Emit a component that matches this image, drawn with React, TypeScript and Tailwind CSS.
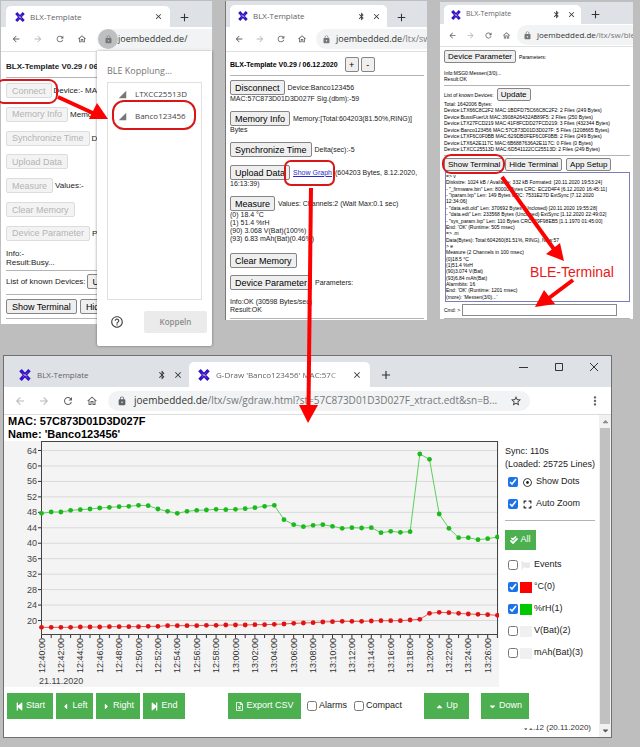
import type { ReactNode } from "react";
import {
  MdArrowBack,
  MdArrowForward,
  MdBluetooth,
  MdClose,
  MdAdd,
  MdHelpOutline,
  MdLock,
  MdMoreVert,
  MdOutlineHome,
  MdRefresh,
  MdSignalCellular4Bar,
  MdStarBorder,
} from "react-icons/md";
import {
  FaCaretDown,
  FaCaretLeft,
  FaCaretRight,
  FaCaretUp,
  FaCheckDouble,
  FaExpand,
  FaFlag,
  FaRegDotCircle,
  FaRegFileExcel,
  FaStepBackward,
  FaStepForward,
} from "react-icons/fa";

const UI = "font-['Open_Sans','Noto_Sans',sans-serif]";

function Logo({ className }: { className: string }) {
  return (
    <svg viewBox="0 0 12 12" className={`shrink-0 ${className}`} aria-hidden="true">
      <path d="M1.5 1.2 Q6 6.5 10.5 10.8 M10.5 1.2 Q6 6 1.5 10.8" stroke="#2b16c9" strokeWidth="3.4" fill="none" />
      <path d="M3.5 4 L8.5 8.5 M8.5 3.5 L4 8" stroke="#8a3fc4" strokeWidth="1" fill="none" />
      <path d="M4.5 5.5 L7.5 6.8" stroke="#e08ab0" strokeWidth="1.2" />
    </svg>
  );
}

type TopProps = {
  url: ReactNode;
  bluetooth?: boolean;
  strip: string;
  tab: string;
  title: string;
  bar: string;
  nav: string;
  icon: string;
  omni: string;
  highlightLock?: boolean;
};

function BrowserTop({ url, bluetooth, strip, tab, title, bar, nav, icon, omni, highlightLock }: TopProps) {
  return (
    <header className={`${UI} text-[#5f6368]`}>
      <div className={`flex items-end bg-[#dee1e6] ${strip}`}>
        <div className={`flex items-center rounded-t-[5px] bg-white ${tab}`}>
          <Logo className="size-[10px]" />
          <span className={`ml-[5px] flex-1 ${title}`}>BLX-Template</span>
          {bluetooth && <MdBluetooth className="mr-[6px] size-[9px] text-[#333]" />}
          <button aria-label="Close tab" className="text-[#333]"><MdClose className="size-[9px]" /></button>
        </div>
        <button aria-label="New tab" className="mb-[3px] ml-[8px] text-[#333]"><MdAdd className="size-[13px]" /></button>
      </div>
      <div className={`flex items-center border-b border-[#e0e0e0] bg-white ${bar}`}>
        <div className={`flex items-center ${nav}`}>
          <button aria-label="Back"><MdArrowBack className={icon} /></button>
          <button aria-label="Forward" className="text-[#b5b8bb]"><MdArrowForward className={icon} /></button>
          <button aria-label="Reload"><MdRefresh className={icon} /></button>
          <button aria-label="Home"><MdOutlineHome className={icon} /></button>
        </div>
        <div className={`flex h-[20px] flex-1 items-center overflow-hidden rounded-l-full bg-[#f1f3f4] whitespace-nowrap text-[#777] ${omni}`}>
          <span className={`flex size-[20px] shrink-0 items-center justify-center rounded-full ${highlightLock ? "bg-[#bdbfc1]" : ""}`}>
            <MdLock className="size-[9px]" />
          </span>
          <span>{url}</span>
        </div>
      </div>
    </header>
  );
}

const buttonSizes = {
  regular: "h-[15px] px-[5px] text-[9px] leading-[12px]",
  snug: "h-[15px] px-[4px] text-[9px] leading-[12px]",
  square: "h-[15px] w-[14px] text-[9px] leading-[12px]",
  small: "h-[13px] px-[3px] text-[8px] leading-[10px]",
};

function Btn({ children, disabled, size = "regular", className = "" }: {
  children: ReactNode;
  disabled?: boolean;
  size?: keyof typeof buttonSizes;
  className?: string;
}) {
  return (
    <button
      disabled={disabled}
      className={`shrink-0 rounded-[2px] border border-[#858585] bg-[#efefef] text-black disabled:border-[#dcdcdc] disabled:bg-[#f3f3f3] disabled:text-[#b4b4b4] ${buttonSizes[size]} ${className}`}
    >
      {children}
    </button>
  );
}

function Rule({ className = "" }: { className?: string }) {
  return <hr className={`border-t border-[#b4b4b4] ${className}`} />;
}

function PairingWindow() {
  const rows: [string, string][] = [
    ["Connect", "Device:- MAC"],
    ["Memory Info", "Memory:-"],
    ["Synchronize Time", "D"],
    ["Upload Data", ""],
    ["Measure", "Values:-"],
    ["Clear Memory", ""],
    ["Device Parameter", "P"],
  ];
  return (
    <section className="relative mt-px h-[345px]">
      <div className="h-[323px] overflow-hidden bg-white">
        <BrowserTop
          url={<span className="text-[#333]">joembedded.de/</span>}
          strip="h-[26px]"
          tab="ml-[5px] h-[21px] w-[164px] pl-[9px] pr-[7px]"
          title="text-[8px]"
          bar="h-[25px]"
          nav="gap-[12px] pl-[10px] pr-[10px]"
          icon="size-[10px]"
          omni="pl-px text-[9px]"
          highlightLock
        />
        <div className="pl-[5px] pt-[10px] text-[8px] leading-[9px] whitespace-nowrap">
          <h1 className="text-[8px] leading-[10px] font-bold">BLX-Template V0.29 / 06.</h1>
          <Rule className="mt-[5px]" />
          <div className="mt-[5px] flex h-[158px] flex-col justify-between">
            {rows.map(([label, text]) => (
              <div key={label} className="flex items-center gap-[2px]">
                <Btn disabled>{label}</Btn>
                <span>{text}</span>
              </div>
            ))}
          </div>
          <p className="mt-[8px]">Info:-</p>
          <p>Result:Busy...</p>
          <Rule className="mt-[3px]" />
          <div className="mt-[3px] flex items-center">
            List of known Devices: <Btn className="ml-px">Update</Btn>
          </div>
          <Rule className="mt-[5px]" />
          <div className="mt-[4px] flex gap-[3px]">
            <Btn>Show Terminal</Btn>
            <Btn>Hide Terminal</Btn>
          </div>
          <Rule className="mt-[4px]" />
        </div>
      </div>

      <div role="dialog" aria-label="BLE Kopplung" className={`absolute top-[50px] right-0 bottom-0 left-[96px] flex flex-col rounded-b-[2px] bg-white pt-[13px] pr-[5px] pl-[10px] text-[#444] shadow-[0_0_3px_rgba(0,0,0,0.45)] ${UI}`}>
        <h2 className="text-[9px] leading-[14px] text-[#757575]">BLE Kopplung...</h2>
        <ul className="mt-[4px] mr-[5px] h-[218px] border border-[#e0e0e0] text-[8px]">
          {["LTXCC25513D", "Banco123456"].map((name) => (
            <li key={name} className="flex h-[22px] items-center gap-[8px] pl-[10px]">
              <MdSignalCellular4Bar className="size-[9px] text-[#777]" />
              {name}
            </li>
          ))}
        </ul>
        <div className="mt-[11px] flex items-center justify-between pl-[3px]">
          <button aria-label="Help"><MdHelpOutline className="size-[14px]" /></button>
          <button disabled className="h-[22px] w-[63px] rounded-[2px] bg-[#ebebeb] text-[8px] font-semibold text-[#8c8c8c]">Koppeln</button>
        </div>
      </div>
    </section>
  );
}

function DeviceWindow() {
  return (
    <section className="mt-px h-[319px] overflow-hidden border-l border-[#777] bg-white">
      <BrowserTop
        url={<><span className="text-[#333]">joembedded.de</span>/ltx/sw</>}
        bluetooth
        strip="h-[26px]"
        tab="ml-[4px] h-[22px] w-[157px] pl-[8px] pr-[6px]"
        title="text-[8px]"
        bar="h-[25px]"
        nav="gap-[11px] pl-[8px] pr-[9px]"
        icon="size-[10px]"
        omni="text-[9px]"
      />
      <div className="pt-[5px] pr-[3px] pl-[4px] text-[7px] leading-[8px] whitespace-nowrap">
        <div className="flex items-center gap-[2px]">
          <h1 className="mr-[5px] text-[7px] font-bold text-black">BLX-Template V0.29 / 06.12.2020</h1>
          <Btn size="square">+</Btn>
          <Btn size="square">-</Btn>
        </div>
        <Rule className="mt-[3px]" />
        <div className="mt-[4px] flex items-center gap-[3px]">
          <Btn size="snug">Disconnect</Btn>
          <span>Device:Banco123456</span>
        </div>
        <p>MAC:57C873D01D3D027F Sig.(dbm):-59</p>
        <div className="mt-[8px] flex items-center gap-[3px]">
          <Btn size="snug">Memory Info</Btn>
          <span>Memory:[Total:604203(81.50%,RING)]</span>
        </div>
        <p>Bytes</p>
        <div className="mt-[8px] flex items-center gap-[3px]">
          <Btn size="snug">Synchronize Time</Btn>
          <span>Delta(sec):-5</span>
        </div>
        <div className="mt-[8px] flex items-center gap-[3px]">
          <Btn size="snug">Upload Data</Btn>
          <a href="#graph" className="text-[#2a2ac8] underline">Show Graph</a>
          <span>(604203 Bytes, 8.12.2020,</span>
        </div>
        <p>16:13:39)</p>
        <div className="mt-[8px] flex items-center gap-[3px]">
          <Btn size="snug">Measure</Btn>
          <span>Values: Channels:2 (Wait Max:0.1 sec)</span>
        </div>
        <p>(0) 18.4 °C</p>
        <p>(1) 51.4 %rH</p>
        <p>(90) 3.068 V(Bat)(100%)</p>
        <p>(93) 6.83 mAh(Bat)(0.46%)</p>
        <div className="mt-[10px] flex">
          <Btn size="snug">Clear Memory</Btn>
        </div>
        <div className="mt-[7px] flex items-center gap-[3px]">
          <Btn size="snug">Device Parameter</Btn>
          <span>Parameters:</span>
        </div>
        <p className="mt-[8px]">Info:OK (30598 Bytes/sec)</p>
        <p>Result:OK</p>
        <Rule className="mt-[4px]" />
      </div>
    </section>
  );
}

const devices = [
  "Total: 1642006 Bytes:",
  "Device:LTX66C8C2F2 MAC:1BDFD75C66C8C2F2: 2 Files (249 Bytes)",
  "Device:BussiFuerUt MAC:3908A26432AB89F5: 2 Files (250 Bytes)",
  "Device:LTX27FCD219 MAC:41F8FCDD27FCD219: 3 Files (432344 Bytes)",
  "Device:Banco123456 MAC:57C873D01D3D027F: 5 Files (1208665 Bytes)",
  "Device:LTXF6C0F0BB MAC:629DB0FEF6C0F0BB: 2 Files (249 Bytes)",
  "Device:LTX6A2E117C MAC:6B6887636A2E117C: 0 Files (0 Bytes)",
  "Device:LTXCC25513D MAC:6D541122CC25513D: 2 Files (249 Bytes)",
];

const terminal = [
  "=> v",
  "Disksize: 1024 kB / Available: 332 kB Formated: [20.11.2020 19:53:24]",
  '- "_firmware.bin" Len: 80000 Bytes CRC: EC2D4F4 [6.12.2020 16:45:11]',
  '- "iparam.lxp" Len: 149 Bytes CRC: 7531E27D ExtSync [7.12.2020',
  "12:34:06]",
  '- "data.edt.old" Len: 370692 Bytes (Unclosed) [20.11.2020 19:55:28]',
  '- "data.edt" Len: 233568 Bytes (Unclosed) ExtSync [1.12.2020 22:49:02]',
  '- "sys_param.lxp" Len: 110 Bytes CRC: 29F98EB5 [1.1.1970 01:45:00]',
  "End: 'OK' (Runtime: 505 msec)",
  "=> .m",
  "Data(Bytes): Total:604260(81.51%, RING), New:57",
  "> e",
  "Measure (2 Channels in 100 msec)",
  "(0)18.5 °C",
  "(1)51.4 %rH",
  "(90)3.074 V(Bat)",
  "(93)6.84 mAh(Bat)",
  "Alarmbits: 16",
  "End: 'OK' (Runtime: 1201 msec)",
  "(more): 'Messen(3/0)...'",
];

function TerminalWindow() {
  return (
    <section className="mt-[2px] h-[317px] overflow-hidden bg-white">
      <BrowserTop
        url={<><span className="text-[#333]">joembedded.de</span>/ltx/sw/ble_</>}
        bluetooth
        strip="h-[22px]"
        tab="ml-[4px] h-[19px] w-[137px] pl-[7px] pr-[5px]"
        title="text-[7px]"
        bar="h-[23px]"
        nav="gap-[9px] pl-[8px] pr-[6px]"
        icon="size-[9px]"
        omni="text-[8px]"
      />
      <div className="pt-[3px] pr-[3px] pl-[4px] text-[5px] leading-[6px] whitespace-nowrap text-black">
        <div className="flex items-center gap-[3px]">
          <Btn size="small">Device Parameter</Btn>
          <span>Parameters:</span>
        </div>
        <p className="mt-[7px]">Info:MSG0:Messen(3/0)...</p>
        <p>Result:OK</p>
        <Rule className="mt-[3px]" />
        <div className="mt-[2px] flex items-center gap-[3px]">
          <span>List of known Devices:</span>
          <Btn size="small">Update</Btn>
        </div>
        <div className="flex h-[51px] flex-col justify-between">
          {devices.map((line) => <p key={line}>{line}</p>)}
        </div>
        <Rule className="mt-[3px]" />
        <div className="mt-[2px] flex">
          <Btn size="small">Show Terminal</Btn>
          <Btn size="small" className="ml-px">Hide Terminal</Btn>
          <Btn size="small" className="ml-[4px]">App Setup</Btn>
        </div>
        <div className="mt-px ml-px flex h-[130px] flex-col justify-between border border-[#7d7dbb] pb-px">
          {terminal.map((line, i) => <p key={i}>{line}</p>)}
        </div>
        <label className="mt-[2px] flex items-center gap-[2px] pr-[13px]">
          Cmd: &gt;
          <input type="text" className="h-[12px] min-w-0 flex-1 border border-[#8a8a8a] px-[2px] text-[8px]" />
        </label>
        <Rule className="mt-[2px]" />
      </div>
    </section>
  );
}

const humidity = [
  160, 156, 156, 151, 149, 147, 144, 142, 140, 139, 136, 137, 147, 154, 160, 154, 151, 150, 148, 149, 148, 146, 143, 139,
  136, 179, 194, 200, 196, 194, 199, 205, 203, 204, 203, 218, 214, 217, 215, -18, -2, 162, 205, 233, 233, 239, 236, 231,
].map((v) => 19 + v / 3);
const temperature = [
  82, 82, 82, 82, 81, 81, 81, 80, 80, 80, 80, 79, 79, 77, 77, 77, 77, 76, 76, 75, 75, 75, 74, 74, 73, 72, 70, 69, 68, 66,
  65, 64, 64, 64, 63, 62, 62, 62, 60, 58, 40, 37, 38, 40, 42, 43, 44, 46,
].map((v) => 159 + v / 3);

function Chart() {
  const x = (i: number) => 37.5 + i * 9.7;
  const levels = Array.from({ length: 12 }, (_, i) => 64 - i * 4);
  const y = (v: number) => 9.5 + (64 - v) * 3.864;
  const line = (pts: number[]) => pts.map((p, i) => `${x(i)},${p}`).join(" ");
  const time = (i: number) => {
    const m = 40 + i;
    return `${m < 60 ? 12 : 13}:${String(m % 60).padStart(2, "0")}:00`;
  };
  return (
    <svg viewBox="0 0 495 246" className="block w-full bg-[#f4f4f4] font-['Liberation_Sans',sans-serif] text-[9px]" role="img" aria-label="Humidity and temperature over time">
      {levels.map((v) => (
        <g key={v}>
          <line x1="38" x2="494" y1={y(v)} y2={y(v)} stroke="#dadada" />
          <line x1="34" x2="38" y1={y(v)} y2={y(v)} stroke="#333" />
          <text x="33" y={y(v) + 3} textAnchor="end" fill="#444">{v}</text>
        </g>
      ))}
      <rect x="37.5" y="0.5" width="456" height="193" fill="none" stroke="#444" />
      {temperature.map((_, i) => (
        <g key={i}>
          <line x1={x(i)} x2={x(i)} y1="194" y2="197" stroke="#333" />
          {i % 2 === 0 && (
            <text transform={`translate(${x(i) + 3} 232) rotate(-90)`} fill="#333">{time(i)}</text>
          )}
        </g>
      ))}
      <text x="35" y="243" fill="#444">21.11.2020</text>
      <polyline points={line(humidity)} fill="none" stroke="#5cd05c" />
      {humidity.map((p, i) => <circle key={i} cx={x(i)} cy={p} r="2.4" fill="#1cb81c" />)}
      <polyline points={line(temperature)} fill="none" stroke="#f05050" />
      {temperature.map((p, i) => <circle key={i} cx={x(i)} cy={p} r="2.4" fill="#e01212" />)}
    </svg>
  );
}

function Green({ children, className }: { children: ReactNode; className: string }) {
  return (
    <button className={`flex items-center justify-center gap-[2px] bg-[#4caf50] text-[9px] text-white ${className}`}>
      {children}
    </button>
  );
}

function GraphWindow() {
  const box = "size-[10px] shrink-0 accent-[#1a73e8]";
  const channels = [
    { name: "°C(0)", color: "bg-[#ff0000]", on: true },
    { name: "%rH(1)", color: "bg-[#00c800]", on: true },
    { name: "V(Bat)(2)", color: "bg-[#f0f0f0]", on: false },
    { name: "mAh(Bat)(3)", color: "bg-[#f0f0f0]", on: false },
  ];
  return (
    <section className="mt-[9px] mr-[28px] ml-[3px] border border-[#707070] bg-white">
      <header className={`${UI} text-[#5f6368]`}>
        <div className="flex h-[31px] items-end bg-[#dee1e6]">
          <div className="flex h-[25px] w-[185px] items-center pr-[6px] pl-[15px]">
            <Logo className="size-[12px]" />
            <span className="ml-[6px] flex-1 text-[8px]">BLX-Template</span>
            <MdBluetooth className="mr-[6px] size-[10px] text-[#333]" />
            <button aria-label="Close tab" className="text-[#333]"><MdClose className="size-[10px]" /></button>
          </div>
          <div className="flex h-[25px] w-[181px] items-center rounded-t-[5px] bg-white pr-[8px] pl-[9px]">
            <Logo className="size-[12px]" />
            <span className="ml-[6px] flex-1 overflow-hidden [mask-image:linear-gradient(to_right,black_85%,transparent)] text-[8px] whitespace-nowrap">G-Draw 'Banco123456' MAC:57C</span>
            <button aria-label="Close tab" className="ml-[4px] text-[#333]"><MdClose className="size-[10px]" /></button>
          </div>
          <button aria-label="New tab" className="mb-[5px] ml-[9px] text-[#333]"><MdAdd className="size-[14px]" /></button>
          <div className="mb-[15px] ml-auto flex items-center gap-[25px] pr-[12px]">
            {["M0 5.500H9", "M1.500 1.500H8.500V8.500H1.500Z", "M1 1L9 9M9 1L1 9"].map((d, i) => (
              <button key={d} aria-label={["Minimize", "Maximize", "Close"][i]}>
                <svg viewBox="0 0 10 10" className="size-[10px]"><path d={d} fill="none" stroke="#333" /></svg>
              </button>
            ))}
          </div>
        </div>
        <div className="flex h-[28px] items-center border-b border-[#dcdcdc] pr-[9px]">
          <div className="flex items-center gap-[12px] pr-[10px] pl-[10px]">
            <button aria-label="Back" className="text-[#b5b8bb]"><MdArrowBack className="size-[12px]" /></button>
            <button aria-label="Forward" className="text-[#b5b8bb]"><MdArrowForward className="size-[12px]" /></button>
            <button aria-label="Reload"><MdRefresh className="size-[12px]" /></button>
            <button aria-label="Home"><MdOutlineHome className="size-[12px]" /></button>
          </div>
          <div className="flex h-[20px] w-[422px] items-center rounded-full bg-[#f1f3f4] pr-[8px] pl-[9px] text-[10px] whitespace-nowrap text-[#777]">
            <MdLock className="mr-[7px] size-[10px] text-[#5f6368]" />
            <span className="flex-1"><span className="text-[#333]">joembedded.de</span>/ltx/sw/gdraw.html?st=57C873D01D3D027F_xtract.edt&amp;sn=B...</span>
            <button aria-label="Bookmark" className="text-[#333]"><MdStarBorder className="size-[12px]" /></button>
          </div>
          <button aria-label="Menu" className="ml-auto"><MdMoreVert className="size-[14px]" /></button>
        </div>
      </header>

      <div className="flex">
        <div className="min-w-0 flex-1">
          <div className="flex">
            <main className="min-w-0 flex-1">
              <h2 className="pl-[4px] text-[11px] leading-[13px] font-bold text-black">
                MAC: 57C873D01D3D027F<br />Name: 'Banco123456'
              </h2>
              <Chart />
            </main>
            <aside className="w-[100px] shrink-0 pt-[30px] pr-[4px] pl-[6px] text-[9px] whitespace-nowrap text-[#222]">
              <p className="leading-[13px]">Sync: 110s</p>
              <p className="leading-[13px]">(Loaded: 25725 Lines)</p>
              <label className="flex h-[22px] items-center pl-[3px]">
                <input type="checkbox" defaultChecked className={box} />
                <FaRegDotCircle className="mr-[4px] ml-[5px] size-[9px]" />Show Dots
              </label>
              <label className="flex h-[22px] items-center pl-[3px]">
                <input type="checkbox" defaultChecked className={box} />
                <FaExpand className="mr-[4px] ml-[5px] size-[9px]" />Auto Zoom
              </label>
              <Rule className="mt-[5px]" />
              <Green className="mt-[9px] h-[20px] w-[31px]"><FaCheckDouble className="size-[8px]" />All</Green>
              <label className="mt-[4px] flex h-[22px] items-center pl-[3px]">
                <input type="checkbox" className={box} />
                <FaFlag className="mr-[4px] ml-[3px] size-[9px] text-[#e8e8e8]" />Events
              </label>
              {channels.map((c) => (
                <label key={c.name} className="flex h-[22px] items-center pl-[3px]">
                  <input type="checkbox" defaultChecked={c.on} className={box} />
                  <span className={`mr-[2px] ml-[2px] h-[11px] w-[12px] ${c.color}`} />{c.name}
                </label>
              ))}
            </aside>
          </div>
          <div className="mt-[6px] flex h-[26px] items-center pl-[3px] text-[9px] text-[#222]">
            <Green className="h-full w-[46px]"><FaStepBackward className="size-[9px]" />Start</Green>
            <Green className="ml-[3px] h-full w-[37px]"><FaCaretLeft className="size-[9px]" />Left</Green>
            <Green className="ml-[3px] h-full w-[44px]"><FaCaretRight className="size-[9px]" />Right</Green>
            <Green className="ml-[3px] h-full w-[42px]"><FaStepForward className="size-[9px]" />End</Green>
            <Green className="ml-[43px] h-full w-[73px]"><FaRegFileExcel className="size-[9px]" />Export CSV</Green>
            <label className="ml-[6px] flex items-center gap-[2px]"><input type="checkbox" className={box} />Alarms</label>
            <label className="ml-[7px] flex items-center gap-[2px]"><input type="checkbox" className={box} />Compact</label>
            <Green className="ml-[22px] h-full w-[45px]"><FaCaretUp className="size-[9px]" />Up</Green>
            <Green className="ml-[12px] h-full w-[48px]"><FaCaretDown className="size-[9px]" />Down</Green>
          </div>
          <div className="mt-[3px] flex h-[15px] justify-end pr-[8px] text-[8px] leading-[12px] text-[#333]">
            <p className="relative">
              V1.12 (20.11.2020)
              <span className="absolute top-0 left-0 h-[6px] w-[14px] bg-white" />
            </p>
          </div>
        </div>
        <div className="flex w-[12px] shrink-0 flex-col items-center justify-between bg-[#f1f1f1]">
          <FaCaretUp className="my-[2px] size-[9px] text-[#8a8a8a]" />
          <div className="w-[10px] flex-1 bg-[#c1c1c1]" />
          <FaCaretDown className="my-[2px] size-[9px] text-[#555]" />
        </div>
      </div>
    </section>
  );
}

function Annotations() {
  return (
    <>
      <svg viewBox="0 0 640 747" className="pointer-events-none absolute top-0 left-0 w-full" aria-hidden="true">
        <g fill="none" stroke="#d81818" strokeWidth="2">
          <rect x="-4" y="80" width="61" height="23" rx="8" />
          <rect x="113" y="101" width="82" height="28" rx="11" />
          <rect x="285" y="161" width="49" height="24" rx="6" />
          <rect x="443" y="155" width="61" height="18" rx="8" />
        </g>
        <g stroke="#ff0000" strokeWidth="4">
          <path d="M58 97 L95 114" />
          <path d="M311 188 L308.500 408" />
          <path d="M502 177 L556 252" />
          <path d="M573 280 L549 298" />
        </g>
        <g fill="#ff0000">
          <path d="M108 119 L89 119 L97 103 Z" />
          <path d="M308 423 L299 405 L318 405 Z" />
          <path d="M564 261 L546 254 L560 243 Z" />
          <path d="M535 307 L544 290 L555 304 Z" />
        </g>
      </svg>
      <p className="absolute top-[263px] left-[82.8%] text-[14px] leading-[18px] whitespace-nowrap text-[#e81818]">BLE-Terminal</p>
    </>
  );
}

export default function App() {
  return (
    <div className="relative min-h-screen overflow-hidden bg-[#bebebe] pb-[8px] font-['Liberation_Sans',Arial,sans-serif] text-[#222]">
      <div className="grid grid-cols-[211fr_202fr_193fr] items-start gap-[13px] pr-[7px] pl-px">
        <PairingWindow />
        <DeviceWindow />
        <TerminalWindow />
      </div>
      <GraphWindow />
      <Annotations />
    </div>
  );
}
